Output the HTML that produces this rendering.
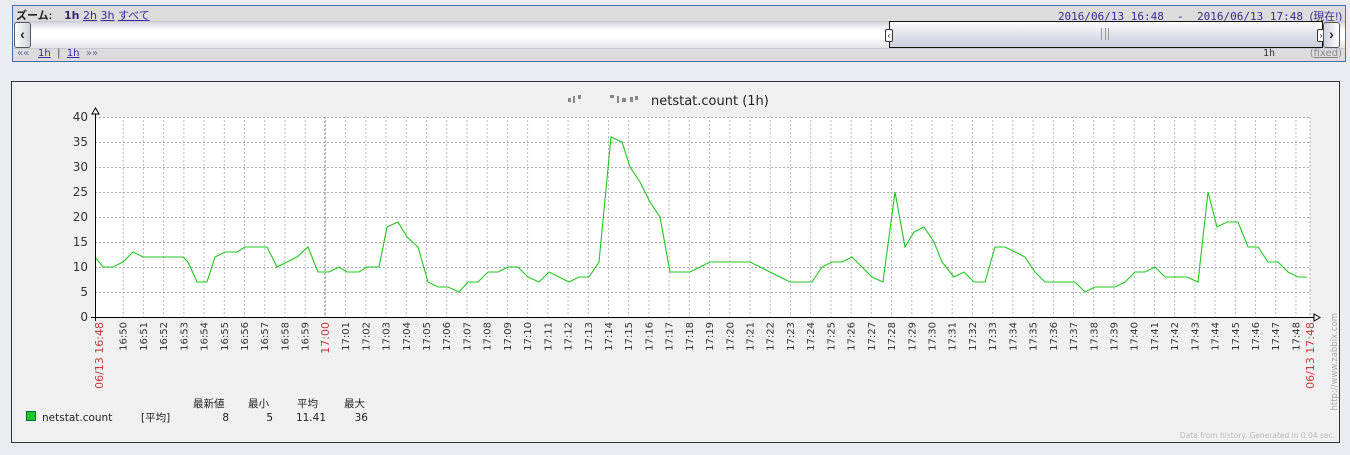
<!DOCTYPE html>
<html><head><meta charset="utf-8"><style>
body{margin:0;width:1350px;height:455px;background:#e9edf1;font-family:"Liberation Sans","Noto Sans CJK JP",sans-serif;position:relative;overflow:hidden}
.bar{position:absolute;left:12px;top:5px;width:1332px;height:55px;border:1px solid #4a6db0;background:#dcdcdc}
.r1{position:absolute;left:0;top:0;width:100%;height:14px;font-size:11px;color:#222}
.r2{position:absolute;left:0;top:15px;width:100%;height:26px;background:linear-gradient(#d4d4dc,#fff 30%,#fff 60%,#e2e2e6);border-top:1px solid #c8c8d0;border-bottom:1px solid #c8c8d0}
.r3{position:absolute;left:0;top:42px;width:100%;height:13px;font-size:11px}
a{color:#3a2a9a;text-decoration:underline}
.panel{position:absolute;left:11px;top:81px;width:1327px;height:360px;border:1px solid #333;background:#f0f0f0}
</style></head><body>
<div class="bar">
 <div class="r1"><span style="position:absolute;left:3px;top:1px;font-weight:bold">ズーム:</span>
 <span style="position:absolute;left:51px;top:1px;font-family:'DejaVu Sans','Noto Sans CJK JP',sans-serif;font-size:11px"><b style="color:#3a2a6a">1h</b> <a>2h</a> <a>3h</a> <a>すべて</a></span>
 <span style="position:absolute;right:3px;top:2px;color:#3a2a8a;font-family:'DejaVu Sans Mono','Noto Sans CJK JP',monospace;font-size:11px">2016/06/13 16:48 &nbsp;- &nbsp;2016/06/13 17:48 <span style="font-family:'Liberation Sans','Noto Sans CJK JP',sans-serif">(現在!)</span></span></div>
 <div class="r2">
  <div style="position:absolute;left:1px;top:0;width:15px;height:24px;border:1px solid #555;border-radius:3px;background:linear-gradient(90deg,#fff,#cfd0dc);font-size:14px;font-weight:bold;line-height:22px;text-align:center;color:#222">‹</div>
  <div style="position:absolute;left:876px;top:-1px;width:432px;height:25px;border:1px solid #111;background:linear-gradient(#fff,#e6e6ee 40%,#cfd0de)"></div>
  <div style="position:absolute;left:872px;top:7px;width:6px;height:11px;border:1px solid #333;border-radius:2px;background:#fff;font-size:8px;line-height:11px;text-align:center">‹</div>
  <div style="position:absolute;left:1304px;top:7px;width:6px;height:11px;border:1px solid #333;border-radius:2px;background:#fff;font-size:8px;line-height:11px;text-align:center">›</div>
  <div style="position:absolute;left:1088px;top:6px;width:6px;height:12px;border-left:1px solid #999;border-right:1px solid #999;"><div style="margin:0 auto;width:1px;height:12px;background:#999"></div></div>
  <div style="position:absolute;left:1310px;top:0;width:15px;height:24px;border:1px solid #555;border-radius:3px;background:linear-gradient(90deg,#cfd0dc,#fff);font-size:14px;font-weight:bold;line-height:22px;text-align:center;color:#222">›</div>
 </div>
 <div class="r3" style="font-family:'DejaVu Sans',sans-serif;font-size:10px"><span style="position:absolute;left:4px;top:0;color:#6a6aa0">««</span><span style="position:absolute;left:25px;top:0"><a>1h</a> <span style="color:#444">&nbsp;|&nbsp;</span> <a>1h</a> <span style="color:#6a6aa0">&nbsp;»»</span></span>
 <span style="position:absolute;left:1250px;top:0;color:#333;font-family:'DejaVu Sans Mono',monospace;font-size:10px">1h</span>
 <span style="position:absolute;right:3px;top:0;color:#888">(<u>fixed</u>)</span></div>
</div>
<div class="panel"></div>
<svg style="position:absolute;left:0;top:0" width="1350" height="455" font-family="DejaVu Sans,Noto Sans CJK JP,sans-serif">
<defs><pattern id="vg" x="122.7" y="0" width="20.22" height="455" patternUnits="userSpaceOnUse"><line x1="0.5" y1="0" x2="0.5" y2="455" stroke="#bbb" stroke-dasharray="2,2"/></pattern></defs>
<rect x="95" y="117" width="1215" height="200" fill="#fff"/>
<rect x="110" y="117" width="1190" height="200" fill="url(#vg)"/>
<line x1="324.9" y1="117" x2="324.9" y2="317" stroke="#888" stroke-dasharray="2,2"/>
<g stroke="#aaa" stroke-dasharray="2,2">
<line x1="95" y1="117.5" x2="1310" y2="117.5"/><line x1="95" y1="142.5" x2="1310" y2="142.5"/><line x1="95" y1="167.5" x2="1310" y2="167.5"/><line x1="95" y1="192.5" x2="1310" y2="192.5"/><line x1="95" y1="217.5" x2="1310" y2="217.5"/><line x1="95" y1="242.5" x2="1310" y2="242.5"/><line x1="95" y1="267.5" x2="1310" y2="267.5"/><line x1="95" y1="292.5" x2="1310" y2="292.5"/><line x1="1310" y1="117" x2="1310" y2="317"/></g>
<polyline fill="none" stroke="#1ec81e" stroke-width="1.1" points="95,257 103,267 113,267 123,262 133,252 143,257 153,257 163,257 173,257 183,257 188,262 197,282 207,282 215,257 225,252 237,252 245,247 257,247 267,247 277,267 287,262 297,257 308,247 318,272 329,272 339,267 347,272 359,272 367,267 379,267 387,227 398,222 407,237 418,247 428,282 438,287 448,287 459,292 468,282 478,282 488,272 498,272 508,267 518,267 528,277 539,282 549,272 559,277 569,282 579,277 589,277 599,262 611,137 622,142 630,167 640,182 650,202 660,217 670,272 680,272 690,272 700,267 710,262 720,262 730,262 740,262 750,262 760,267 770,272 780,277 790,282 800,282 812,282 822,267 832,262 842,262 852,257 862,267 872,277 883,282 895,192 905,247 914,232 924,227 934,242 942,262 954,277 964,272 974,282 985,282 995,247 1005,247 1015,252 1025,257 1035,272 1045,282 1055,282 1065,282 1075,282 1085,292 1095,287 1105,287 1115,287 1125,282 1135,272 1145,272 1155,267 1165,277 1177,277 1187,277 1198,282 1208,192 1217,227 1227,222 1238,222 1248,247 1258,247 1268,262 1278,262 1288,272 1298,277 1307,277"/>
<line x1="95.5" y1="110" x2="95.5" y2="321" stroke="#000"/>
<line x1="91" y1="317.5" x2="1314" y2="317.5" stroke="#000"/>
<polygon points="95.5,108 92,114 99,114" fill="#fff" stroke="#000"/>
<polygon points="1320,317.5 1314,314 1314,321" fill="#fff" stroke="#000"/>
<g font-size="12" fill="#333" text-anchor="end">
<text x="88" y="121">40</text><text x="88" y="146">35</text><text x="88" y="171">30</text><text x="88" y="196">25</text><text x="88" y="221">20</text><text x="88" y="246">15</text><text x="88" y="271">10</text><text x="88" y="296">5</text><text x="88" y="321">0</text></g>
<text x="651" y="105" font-size="13" fill="#222">netstat.count (1h)</text>
<g fill="#888"><rect x="568" y="98" width="3" height="4"/><rect x="573" y="96" width="2" height="7"/><rect x="578" y="95" width="3" height="4"/><rect x="610" y="95" width="4" height="3"/><rect x="617" y="96" width="2" height="7"/><rect x="622" y="98" width="4" height="4"/><rect x="630" y="97" width="3" height="5"/><rect x="635" y="96" width="3" height="4"/></g>
<g font-size="10" fill="#333" text-anchor="end">
<text transform="translate(103,322) rotate(-90)" fill="#c04040" font-size="11">06/13 16:48</text>
<text transform="translate(126.7,322) rotate(-90)">16:50</text><text transform="translate(146.9,322) rotate(-90)">16:51</text><text transform="translate(167.1,322) rotate(-90)">16:52</text><text transform="translate(187.4,322) rotate(-90)">16:53</text><text transform="translate(207.6,322) rotate(-90)">16:54</text><text transform="translate(227.8,322) rotate(-90)">16:55</text><text transform="translate(248,322) rotate(-90)">16:56</text><text transform="translate(268.2,322) rotate(-90)">16:57</text><text transform="translate(288.5,322) rotate(-90)">16:58</text><text transform="translate(308.7,322) rotate(-90)">16:59</text><text transform="translate(329,322) rotate(-90)" fill="#c04040" font-size="11">17:00</text><text transform="translate(349.1,322) rotate(-90)">17:01</text><text transform="translate(369.3,322) rotate(-90)">17:02</text><text transform="translate(389.6,322) rotate(-90)">17:03</text><text transform="translate(409.8,322) rotate(-90)">17:04</text><text transform="translate(430,322) rotate(-90)">17:05</text><text transform="translate(450.2,322) rotate(-90)">17:06</text><text transform="translate(470.4,322) rotate(-90)">17:07</text><text transform="translate(490.7,322) rotate(-90)">17:08</text><text transform="translate(510.9,322) rotate(-90)">17:09</text><text transform="translate(531.1,322) rotate(-90)">17:10</text><text transform="translate(551.3,322) rotate(-90)">17:11</text><text transform="translate(571.5,322) rotate(-90)">17:12</text><text transform="translate(591.8,322) rotate(-90)">17:13</text><text transform="translate(612,322) rotate(-90)">17:14</text><text transform="translate(632.2,322) rotate(-90)">17:15</text><text transform="translate(652.4,322) rotate(-90)">17:16</text><text transform="translate(672.6,322) rotate(-90)">17:17</text><text transform="translate(692.9,322) rotate(-90)">17:18</text><text transform="translate(713.1,322) rotate(-90)">17:19</text><text transform="translate(733.3,322) rotate(-90)">17:20</text><text transform="translate(753.5,322) rotate(-90)">17:21</text><text transform="translate(773.7,322) rotate(-90)">17:22</text><text transform="translate(794,322) rotate(-90)">17:23</text><text transform="translate(814.2,322) rotate(-90)">17:24</text><text transform="translate(834.4,322) rotate(-90)">17:25</text><text transform="translate(854.6,322) rotate(-90)">17:26</text><text transform="translate(874.8,322) rotate(-90)">17:27</text><text transform="translate(895.1,322) rotate(-90)">17:28</text><text transform="translate(915.3,322) rotate(-90)">17:29</text><text transform="translate(935.5,322) rotate(-90)">17:30</text><text transform="translate(955.7,322) rotate(-90)">17:31</text><text transform="translate(975.9,322) rotate(-90)">17:32</text><text transform="translate(996.2,322) rotate(-90)">17:33</text><text transform="translate(1016.4,322) rotate(-90)">17:34</text><text transform="translate(1036.6,322) rotate(-90)">17:35</text><text transform="translate(1056.8,322) rotate(-90)">17:36</text><text transform="translate(1077,322) rotate(-90)">17:37</text><text transform="translate(1097.3,322) rotate(-90)">17:38</text><text transform="translate(1117.5,322) rotate(-90)">17:39</text><text transform="translate(1137.7,322) rotate(-90)">17:40</text><text transform="translate(1157.9,322) rotate(-90)">17:41</text><text transform="translate(1178.1,322) rotate(-90)">17:42</text><text transform="translate(1198.4,322) rotate(-90)">17:43</text><text transform="translate(1218.6,322) rotate(-90)">17:44</text><text transform="translate(1238.8,322) rotate(-90)">17:45</text><text transform="translate(1259,322) rotate(-90)">17:46</text><text transform="translate(1279.2,322) rotate(-90)">17:47</text><text transform="translate(1299.5,322) rotate(-90)">17:48</text>
<text transform="translate(1314,322) rotate(-90)" fill="#c04040" font-size="11">06/13 17:48</text>
<text transform="translate(1337,313) rotate(-90)" fill="#aaa" font-size="8.5" text-anchor="end">http://www.zabbix.com</text></g>
<g font-size="10.5" fill="#222">
<text x="193" y="407">最新値</text><text x="248" y="407">最小</text><text x="297" y="407">平均</text><text x="344" y="407">最大</text>
<rect x="26.5" y="411.5" width="9" height="9" fill="#1ec81e" stroke="#064"/>
<text x="42" y="421">netstat.count</text><text x="141" y="421">[平均]</text>
<text x="229" y="421" text-anchor="end">8</text><text x="273" y="421" text-anchor="end">5</text><text x="326" y="421" text-anchor="end">11.41</text><text x="368" y="421" text-anchor="end">36</text></g>
<text x="1335" y="438" font-size="7.5" fill="#bbb" text-anchor="end">Data from history. Generated in 0.04 sec.</text>
</svg>
</body></html>
